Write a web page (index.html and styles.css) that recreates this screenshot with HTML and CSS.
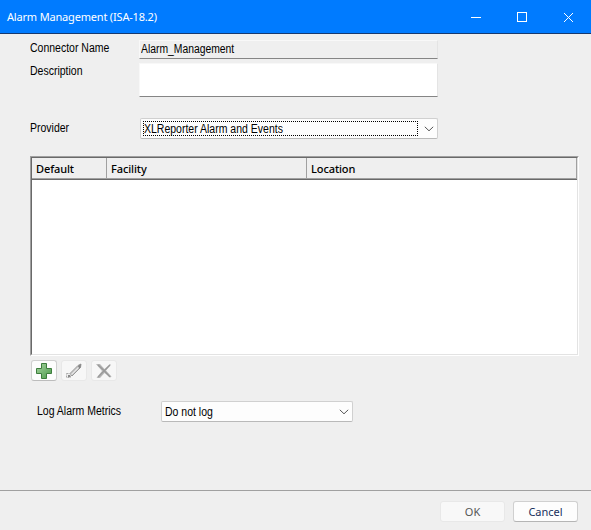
FILE: index.html
```html
<!DOCTYPE html>
<html lang="en">
<head>
<meta charset="utf-8">
<title>Alarm Management (ISA-18.2)</title>
<link rel="stylesheet" href="styles.css">
</head>
<body>
<div class="window">
  <header class="titlebar">
    <span class="title">Alarm Management (ISA-18.2)</span>
    <svg class="controls" width="120" height="33" viewBox="0 0 120 33" fill="none" stroke="#fff" shape-rendering="crispEdges">
      <path d="M0 17.5h10M46.5 12.5h9v9h-9z"/>
      <path d="M93 13l9 9M102 13l-9 9" shape-rendering="auto"/>
    </svg>
  </header>
  <main class="content">
    <div class="row name-row">
      <label class="label"><span class="condensed">Connector Name</span></label>
      <div class="field readonly"><span class="condensed tight">Alarm_Management</span></div>
    </div>
    <div class="row desc-row">
      <label class="label"><span class="condensed">Description</span></label>
      <div class="field description"></div>
    </div>
    <div class="row provider-row">
      <label class="label"><span class="condensed">Provider</span></label>
      <div class="select provider">
        <div class="focus"><span class="condensed">XLReporter Alarm and Events</span></div>
        <svg class="chevron" width="10" height="6" viewBox="0 0 10 6" fill="none" stroke="#555"><path d="M.8.8L5 4.8 9.2.8"/></svg>
      </div>
    </div>
    <div class="table">
      <div class="table-inner">
        <div class="thead">
          <div class="th">Default</div>
          <div class="th">Facility</div>
          <div class="th">Location</div>
        </div>
      </div>
    </div>
    <div class="tools">
      <button class="tool active" aria-label="Add">
        <svg width="18" height="18" viewBox="0 0 18 18"><defs><linearGradient id="green" x2="1" y2="1"><stop stop-color="#a5d3a0"/><stop offset="1" stop-color="#4d9b4b"/></linearGradient></defs><path d="M6.5 1.5h5v5h5v5h-5v5h-5v-5h-5v-5h5z" fill="url(#green)" stroke="#3d7d3d"/></svg>
      </button>
      <button class="tool" aria-label="Edit" disabled>
        <svg width="18" height="18" viewBox="0 0 18 18"><path d="M5 11.5L13 3.5 16 2 15.5 5.5 7 14z" fill="#ccc" stroke="#999"/><path d="M13 4l3-2-.5 3.5L14 7z" fill="#858585"/><path d="M6.5 12.5l7-7" stroke="#e8e8e8"/><path d="M1.5 11.5h4v4h-4z" fill="#eee" stroke="#aaa" stroke-dasharray="2 1"/><path d="M3 13h2v2H3z" fill="#888"/></svg>
      </button>
      <button class="tool" aria-label="Delete" disabled>
        <svg width="18" height="18" viewBox="0 0 18 18"><path d="M1 2h4l4.5 5L15 2l.8.7L11 8.5l5.5 6-1 1L9.5 11 5 16H1.5L7 9z" fill="#b8b8b8"/><path d="M3 3l6 5.5L15 15M15 3L9 9l-6 6" fill="none" stroke="#999" stroke-width="1.3"/></svg>
      </button>
    </div>
    <div class="log-row">
      <label class="log-label"><span class="condensed">Log Alarm Metrics</span></label>
      <div class="select log"><span class="condensed">Do not log</span>
        <svg class="chevron" width="10" height="6" viewBox="0 0 10 6" fill="none" stroke="#555"><path d="M.8.8L5 4.8 9.2.8"/></svg>
      </div>
    </div>
  </main>
  <footer class="footer">
    <button class="btn" disabled>OK</button>
    <button class="btn cancel">Cancel</button>
  </footer>
</div>
</body>
</html>
```
FILE: styles.css
```css
* { box-sizing: border-box; }
body { margin: 0; font: 12px/14px "Liberation Sans", sans-serif; color: #000; }
button { padding: 0; font: inherit; }
span { white-space: nowrap; }
.condensed { display: inline-block; transform: scaleX(.875); transform-origin: left center; }
.tight { transform: scaleX(.863); }
.window { width: 591px; height: 530px; display: flex; flex-direction: column; background: #efefef; overflow: hidden; }
.titlebar { height: 34px; flex: none; display: flex; justify-content: space-between; background: #007bff; border-bottom: 1px solid #16396f; color: #fff; padding-left: 7px; }
.title { font: 11px/33px "Noto Sans", sans-serif; letter-spacing: -.18px; }
.controls { flex: none; }
.content { flex: 1; padding: 6px 12px 0 30px; }
.row { display: flex; }
.label { width: 109px; flex: none; }
.name-row { height: 19px; margin-bottom: 4px; }
.name-row .label { padding-top: 1px; }
.desc-row .label, .provider-row .label { padding-top: 1px; }
.field { width: 299px; border: 1px solid #f8f8f8; border-right-color: #e4e4e4; border-bottom-color: #858585; }
.readonly { padding: 1px 0 0 1px; }
.description { height: 34px; background: #fff; }
.provider-row { margin-top: 21px; }
.provider-row .label { width: 110px; padding-top: 3px; }
.select { height: 21px; display: flex; align-items: center; justify-content: space-between; border: 1px solid #d0d0d0; border-bottom-color: #b9b9b9; border-radius: 2px; background: #fdfdfd; }
.provider { width: 298px; padding: 0 3px 0 2px; }
.focus { width: 275px; height: 15px; border: 1px dotted #000; line-height: 14px; }
.log { width: 192px; padding: 0 3px 0 3px; }
.table { width: 549px; height: 200px; margin-top: 17px; border: 1px solid #a0a0a0; border-right-color: #fff; border-bottom-color: #fff; }
.table-inner { height: 198px; background: #fff; border: 1px solid #696969; border-right-color: #e3e3e3; border-bottom-color: #e3e3e3; }
.thead { height: 22px; display: grid; grid-template-columns: 75px 200px 270px; background: #efefef; border-bottom: 1px solid #696969; }
.th { border-right: 1px solid #a0a0a0; border-bottom: 1px solid #a0a0a0; padding: 2px 0 0 4px; font: 500 11px/17px "Noto Sans", sans-serif; letter-spacing: -.1px; }
.tools { display: flex; gap: 4px; margin: 4px 0 0 1px; }
.tool { width: 26px; height: 21px; display: flex; align-items: center; justify-content: center; background: #f7f7f7; border: 1px solid #e8e8e8; border-radius: 3px; }
.tool.active { background: #fdfdfd; border-color: #d0d0d0; border-bottom-color: #bcbcbc; }
.log-row { display: flex; margin: 20px 0 0 7px; }
.log-label { width: 124px; padding-top: 3px; }
.footer { height: 40px; flex: none; display: flex; gap: 8px; justify-content: flex-end; border-top: 1px solid #a0a0a0; padding: 10px 13px 0 0; }
.btn { width: 65px; height: 21px; background: #f8f8f8; border: 1px solid #e8e8e8; border-radius: 3px; color: #555; font: 11px/18px "Noto Sans", sans-serif; padding-top: 1px; }
.cancel { background: #fdfdfd; border-color: #d0d0d0; border-bottom-color: #b5b5b5; color: #172f5c; }
```
